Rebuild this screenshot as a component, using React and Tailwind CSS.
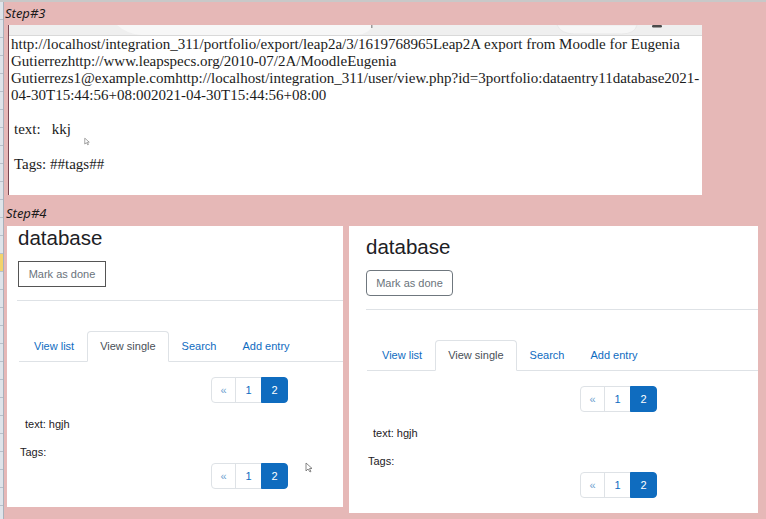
import React from "react";

const sans = { fontFamily: '"Liberation Sans", Arial, sans-serif' };
const serif = { fontFamily: '"Liberation Serif", "Times New Roman", serif' };
const label = { fontFamily: '"Noto Sans", "Open Sans", sans-serif' };

const RowHeaders = () => (
  <div className="flex w-[4px] flex-col border-r border-[#a9b1bb] bg-[#dfe4ea]">
    {Array.from({ length: 29 }).map((_, index) => (
      <div
        key={index}
        className={`h-[18px] shrink-0 border-b border-[#b8c0ca] ${index === 14 ? "bg-[#f3d36b]" : ""}`}
      />
    ))}
  </div>
);

const Cursor = ({ className = "" }) => (
  <svg className={`absolute ${className}`} width="8" height="11" viewBox="0 0 8 11">
    <path d="M1 1 L1 9 L3 7 L5 10 L6 9.4 L4.4 6.6 L7 6.4 Z" fill="#ffffff" stroke="#6b6b6b" strokeWidth="0.8" />
  </svg>
);

const ExportPreview = () => (
  <div className="relative ml-[4px] flex h-[170px] w-[694px] flex-col border-l border-[#7a4652] bg-white">
    <div className="h-[11px] shrink-0 border-b border-[#d9d9d9] bg-[#efefef]">
      <svg width="693" height="11" viewBox="0 0 693 11">
        <path d="M108 0 Q118 9 132 10 L348 10 Q360 9 364 0 Z" fill="#f7f7f7" />
        <rect x="362" y="0" width="1.5" height="3" fill="#9a9a9a" />
        <path d="M548 0 Q552 9 566 9 L612 9 Q626 9 628 0 Z" fill="#f6f6f6" stroke="#e2e2e2" strokeWidth="0.6" />
        <rect x="643" y="0" width="10" height="2.5" rx="1.2" fill="#4a4a4a" />
      </svg>
    </div>
    <div className="pl-[2px] text-[15px] leading-[17px] text-[#1b1b1b]" style={serif}>
      <p className="whitespace-nowrap">
        http://localhost/integration_311/portfolio/export/leap2a/3/1619768965Leap2A export from Moodle for Eugenia
      </p>
      <p className="whitespace-nowrap">Gutierrezhttp://www.leapspecs.org/2010-07/2A/MoodleEugenia</p>
      <p className="whitespace-nowrap">
        Gutierrezs1@example.comhttp://localhost/integration_311/user/view.php?id=3portfolio:dataentry11database2021-
      </p>
      <p className="whitespace-nowrap">04-30T15:44:56+08:002021-04-30T15:44:56+08:00</p>
      <p className="ml-[3px] mt-[17px] whitespace-nowrap">
        text:<span className="ml-[11px]">kkj</span>
      </p>
      <p className="ml-[3px] mt-[18px] whitespace-nowrap">Tags: ##tags##</p>
    </div>
    <Cursor className="left-[74px] top-[111px] scale-75" />
  </div>
);

const Pagination = ({ offset }) => (
  <div className={`flex h-[26px] text-[11px] leading-none ${offset}`}>
    <span className="flex w-[25px] items-center justify-center rounded-l-[4px] border border-[#dee2e6] bg-white text-[#6f9fd0]">
      «
    </span>
    <span className="-ml-px flex w-[27px] items-center justify-center border border-[#dee2e6] bg-white text-[#0f6cbf]">
      1
    </span>
    <span className="-ml-px flex w-[27px] items-center justify-center rounded-r-[4px] border border-[#0f6cbf] bg-[#0f6cbf] text-white">
      2
    </span>
  </div>
);

const tabs = ["View list", "View single", "Search", "Add entry"];

const DatabasePanel = ({ className, padding, buttonClass, pagination, children }) => (
  <section className={`relative flex shrink-0 flex-col bg-white ${className}`} style={sans}>
    <div className={padding}>
      <h2 className="text-[20.5px] font-normal leading-[24px] text-[#1d2125]">database</h2>
      <button
        type="button"
        className={`mt-[11px] flex h-[26px] items-center justify-center border bg-white text-[11px] text-[#6a737b] ${buttonClass}`}
      >
        Mark as done
      </button>
    </div>
    <div className={`mt-[13px] border-t border-[#dee2e6] ${padding.includes("pl-[17px]") ? "ml-[17px]" : "ml-[10px]"}`} />
    <div className={`mt-[30px] border-b border-[#dee2e6] ${padding.includes("pl-[17px]") ? "ml-[18px]" : "ml-[12px]"}`}>
      <ul className="-mb-px ml-[2px] flex h-[31px] text-[11px]">
        {tabs.map((tab) => (
          <li
            key={tab}
            className={
              tab === "View single"
                ? "flex items-center rounded-t-[4px] border border-b-white border-[#dee2e6] bg-white px-[12px] text-[#495057]"
                : "flex items-center border border-transparent px-[12px] text-[#0f6cbf]"
            }
          >
            {tab}
          </li>
        ))}
      </ul>
    </div>
    <div className={`flex flex-col text-[11px] leading-[16px] text-[#1d2125] ${padding.includes("pl-[17px]") ? "pl-[17px]" : "pl-[11px]"}`}>
      <Pagination offset={`mt-[15px] ${pagination}`} />
      <p className="ml-[7px] mt-[13px]">text: hgjh</p>
      <p className="ml-[2px] mt-[12px]">Tags:</p>
      <Pagination offset={`mt-[3px] ${pagination}`} />
    </div>
    {children}
  </section>
);

export default function App() {
  return (
    <div className="flex h-[519px] w-[766px] flex-col overflow-hidden bg-[#e6b8b7]">
      <div className="h-[2px] shrink-0 bg-[#c8c8c8]" />
      <div className="flex flex-1">
        <RowHeaders />
        <div className="flex flex-1 flex-col">
          <div className="h-[23px] pl-[1px] pt-[3px] text-[13px] italic leading-[16px] text-[#1a1a1a]" style={label}>
            Step#3
          </div>
          <ExportPreview />
          <div className="h-[31px] pl-[2px] pt-[10px] text-[13px] italic leading-[16px] text-[#1a1a1a]" style={label}>
            Step#4
          </div>
          <div className="flex items-start">
            <DatabasePanel
              className="ml-[3px] h-[281px] w-[336px]"
              padding="pl-[11px]"
              buttonClass="w-[88px] border-[#555555]"
              pagination="ml-[193px]"
            >
              <Cursor className="left-[298px] top-[236px]" />
            </DatabasePanel>
            <DatabasePanel
              className="ml-[6px] h-[287px] w-[409px]"
              padding="pl-[17px] pt-[9px]"
              buttonClass="w-[87px] rounded-[4px] border-[#6f777e]"
              pagination="ml-[214px]"
            />
          </div>
        </div>
      </div>
    </div>
  );
}
